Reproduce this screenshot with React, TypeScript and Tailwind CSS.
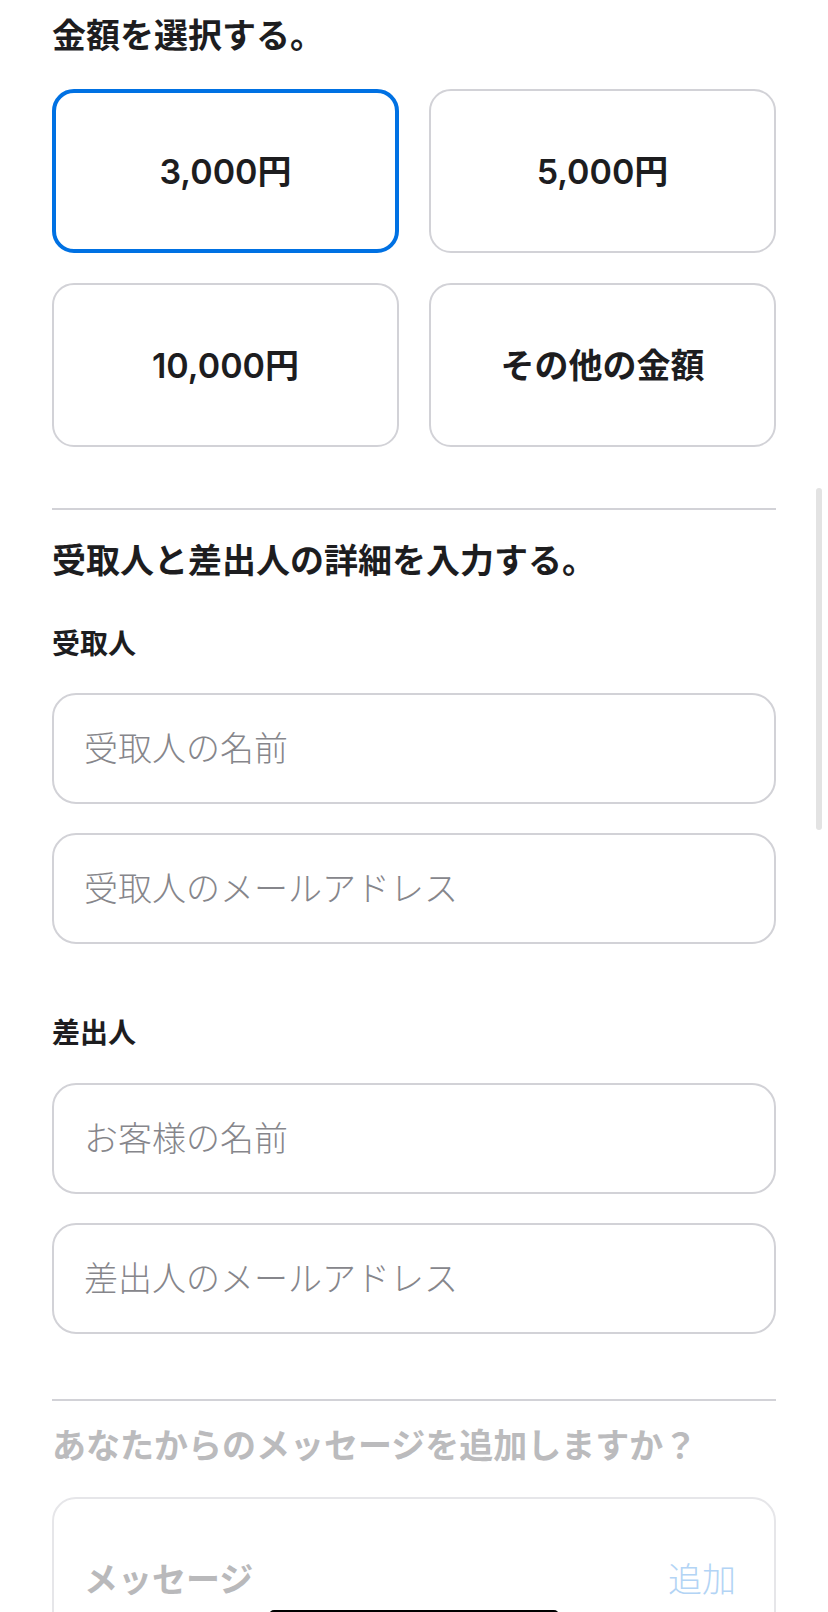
import { useState } from 'react';

const amounts = ['3,000円', '5,000円', '10,000円', 'その他の金額'];

function Field({ placeholder }: { placeholder: string }) {
  return (
    <input
      type="text"
      placeholder={placeholder}
      className="w-full h-[111px] rounded-[24px] border-2 border-[#d2d2d7] bg-white px-[30px] text-[34px] font-light text-[#1d1d1f] placeholder:text-[#86868b] focus:outline-none"
    />
  );
}

export default function App() {
  const [selected, setSelected] = useState(0);

  return (
    <div
      className="relative h-[1612px] overflow-hidden bg-white text-[#1d1d1f]"
      style={{ fontFamily: 'Inter, "Noto Sans CJK JP", sans-serif' }}
    >
      <div className="px-[52px] pt-[15px]">
        <h2 className="text-[34px] leading-[41px] font-bold">金額を選択する。</h2>

        <div className="mt-[33px] grid grid-cols-2 gap-x-[30px] gap-y-[30px]">
          {amounts.map((a, i) => (
            <button
              key={a}
              onClick={() => setSelected(i)}
              className={`h-[164px] rounded-[22px] bg-white text-[34px] font-semibold text-[#1d1d1f] ${
                selected === i ? 'border-4 border-[#0071e3]' : 'border-2 border-[#d2d2d7]'
              }`}
            >
              {a}
            </button>
          ))}
        </div>

        <div className="mt-[61px] h-[2px] bg-[#d2d2d7]" />

        <h2 className="mt-[30px] text-[34px] leading-[41px] font-bold">受取人と差出人の詳細を入力する。</h2>

        <div className="mt-[46px] text-[28px] leading-[34px] font-bold">受取人</div>
        <div className="mt-[32px] flex flex-col gap-[29px]">
          <Field placeholder="受取人の名前" />
          <Field placeholder="受取人のメールアドレス" />
        </div>

        <div className="mt-[72px] text-[28px] leading-[34px] font-bold">差出人</div>
        <div className="mt-[33px] flex flex-col gap-[29px]">
          <Field placeholder="お客様の名前" />
          <Field placeholder="差出人のメールアドレス" />
        </div>

        <div className="mt-[65px] h-[2px] bg-[#d2d2d7]" />

        <h2 className="mt-[24px] text-[34px] leading-[41px] font-bold text-[#bbbbbd]">
          あなたからのメッセージを追加しますか？
        </h2>

        <div className="mt-[31px] flex h-[164px] items-center justify-between rounded-[24px] border-2 border-[#e6e6e9] pl-[30px] pr-[38px]">
          <span className="text-[34px] font-bold text-[#b9b9bb]">メッセージ</span>
          <span className="text-[34px] font-light text-[#b3d4f5]">追加</span>
        </div>
      </div>

      {/* overlay scrollbar */}
      <div className="absolute left-[816px] top-[488px] h-[342px] w-[6px] rounded-full bg-[#e3e3e3]" />
      {/* home indicator */}
      <div className="absolute left-[269px] top-[1610px] h-[10px] w-[290px] rounded-full bg-black" />
    </div>
  );
}
